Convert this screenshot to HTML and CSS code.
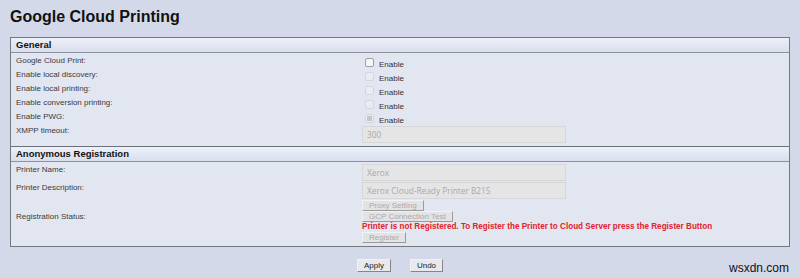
FILE: index.html
```html
<!DOCTYPE html>
<html lang="en">
<head>
    <meta charset="UTF-8">
    <meta name="viewport" content="width=device-width, initial-scale=1.0">
    <title>Google Cloud Printing</title>
    <link rel="stylesheet" href="styles.css">
</head>
<body>
    <h1 class="pageTitle">Google Cloud Printing</h1>

    <div class="panel">
        <div class="sectionHead">General</div>
        <div class="sectionBody">
            <div class="row">
                <div class="label">Google Cloud Print:</div>
                <div class="value"><input type="checkbox" class="chk"><span class="chkText">Enable</span></div>
            </div>
            <div class="row">
                <div class="label">Enable local discovery:</div>
                <div class="value"><input type="checkbox" class="chk" disabled><span class="chkText">Enable</span></div>
            </div>
            <div class="row">
                <div class="label">Enable local printing:</div>
                <div class="value"><input type="checkbox" class="chk" disabled><span class="chkText">Enable</span></div>
            </div>
            <div class="row">
                <div class="label">Enable conversion printing:</div>
                <div class="value"><input type="checkbox" class="chk" disabled><span class="chkText">Enable</span></div>
            </div>
            <div class="row">
                <div class="label">Enable PWG:</div>
                <div class="value"><input type="checkbox" class="chk" checked disabled><span class="chkText">Enable</span></div>
            </div>
            <div class="row tall">
                <div class="label">XMPP timeout:</div>
                <div class="value"><input type="text" class="field" value="300" disabled></div>
            </div>
        </div>

        <div class="sectionHead">Anonymous Registration</div>
        <div class="sectionBody second">
            <div class="row fieldRow">
                <div class="label">Printer Name:</div>
                <div class="value"><input type="text" class="field" value="Xerox" disabled></div>
            </div>
            <div class="row fieldRow">
                <div class="label">Printer Description:</div>
                <div class="value"><input type="text" class="field" value="Xerox Cloud-Ready Printer B215" disabled></div>
            </div>
            <div class="row btnRow">
                <div class="label"></div>
                <div class="value"><button class="btn" disabled>Proxy Setting</button></div>
            </div>
            <div class="row btnRow">
                <div class="label">Registration Status:</div>
                <div class="value"><button class="btn" disabled>GCP Connection Test</button></div>
            </div>
            <div class="row msgRow">
                <div class="label"></div>
                <div class="value"><span class="statusMsg">Printer is not Registered. To Register the Printer to Cloud Server press the Register Button</span></div>
            </div>
            <div class="row btnRow">
                <div class="label"></div>
                <div class="value"><button class="btn" disabled>Register</button></div>
            </div>
        </div>
    </div>

    <div class="actions">
        <button class="btn action">Apply</button>
        <button class="btn action">Undo</button>
    </div>

    <div class="watermark">wsxdn.com</div>
</body>
</html>
```

FILE: styles.css
```css
body {
    margin: 0;
    padding: 0 10px;
    background: #d3d9e8;
    font-family: "Liberation Sans", Arial, sans-serif;
    color: #333;
    position: relative;
    height: 278px;
    box-sizing: border-box;
    overflow: hidden;
}

.pageTitle {
    margin: 8px 0 11px;
    font-size: 16px;
    line-height: 18px;
    font-weight: bold;
    color: #111;
}

.panel {
    border: 1px solid #74787f;
    background: #e2e6f1;
}

.sectionHead {
    height: 14px;
    line-height: 14px;
    padding-left: 5px;
    font-size: 9.5px;
    font-weight: bold;
    color: #111;
    background: linear-gradient(#eef1fa, #d9deee);
    border-bottom: 1px solid #8d929d;
}
.sectionBody + .sectionHead {
    border-top: 1px solid #6c7078;
}

.sectionBody {
    padding: 2px 0 3px 5px;
}
.sectionBody.second {
    padding-bottom: 3px;
}

.row {
    display: grid;
    grid-template-columns: 346px 1fr;
    height: 14px;
    font-size: 8px;
}
.row.tall { height: 18px; }
.row.fieldRow { height: 18px; }
.row.btnRow { height: 11px; }
.row.msgRow { height: 10px; }

.label {
    line-height: 11px;
    color: #3a3a3a;
}

.value {
    display: flex;
    align-items: flex-start;
}

/* checkboxes */
.chk {
    appearance: none;
    width: 9px;
    height: 9px;
    margin: 3px 5px 0 3px;
    border: 1px solid #9a9da3;
    border-radius: 2px;
    background: #f5f6f8;
    box-sizing: border-box;
    position: relative;
}
.chk:disabled {
    border-color: #d3d6de;
    background: #e9ecf4;
}
.chk:checked:disabled::after {
    content: "";
    position: absolute;
    left: 1px;
    top: 1px;
    width: 5px;
    height: 5px;
    background: #c4c6cb;
}
.chkText {
    margin-top: 5px;
    line-height: 10px;
    color: #333;
}

/* text inputs */
.field {
    width: 204px;
    height: 17px;
    margin: 1px 0 0;
    padding: 0 4px;
    box-sizing: border-box;
    border: 1px solid #d6d7da;
    background: #e5e5e6;
    font-family: "Open Sans", "Liberation Sans", sans-serif;
    font-size: 8.3px;
    color: #a9a9a9;
}
.fieldRow .field { margin-top: 0; }

/* buttons */
.btn {
    height: 11px;
    padding: 0 6px;
    font-family: "Liberation Sans", Arial, sans-serif;
    font-size: 8px;
    line-height: 9px;
    color: #aaa;
    background: #e3e3e5;
    border: 1px solid #f2f2f4;
    border-right-color: #9b9b9b;
    border-bottom-color: #9b9b9b;
    border-radius: 0;
}

.statusMsg {
    font-size: 8.15px;
    line-height: 10px;
    font-weight: bold;
    color: #e3212b;
    white-space: nowrap;
}

.actions {
    display: flex;
    justify-content: center;
    gap: 19px;
    margin-top: 12px;
}
.btn.action {
    height: 13px;
    padding: 0 6px;
    color: #222;
    background: #e8e9ec;
    border-right-color: #858585;
    border-bottom-color: #858585;
}

.watermark {
    position: absolute;
    right: 11px;
    bottom: 3px;
    font-size: 12px;
    color: #111;
}
```
